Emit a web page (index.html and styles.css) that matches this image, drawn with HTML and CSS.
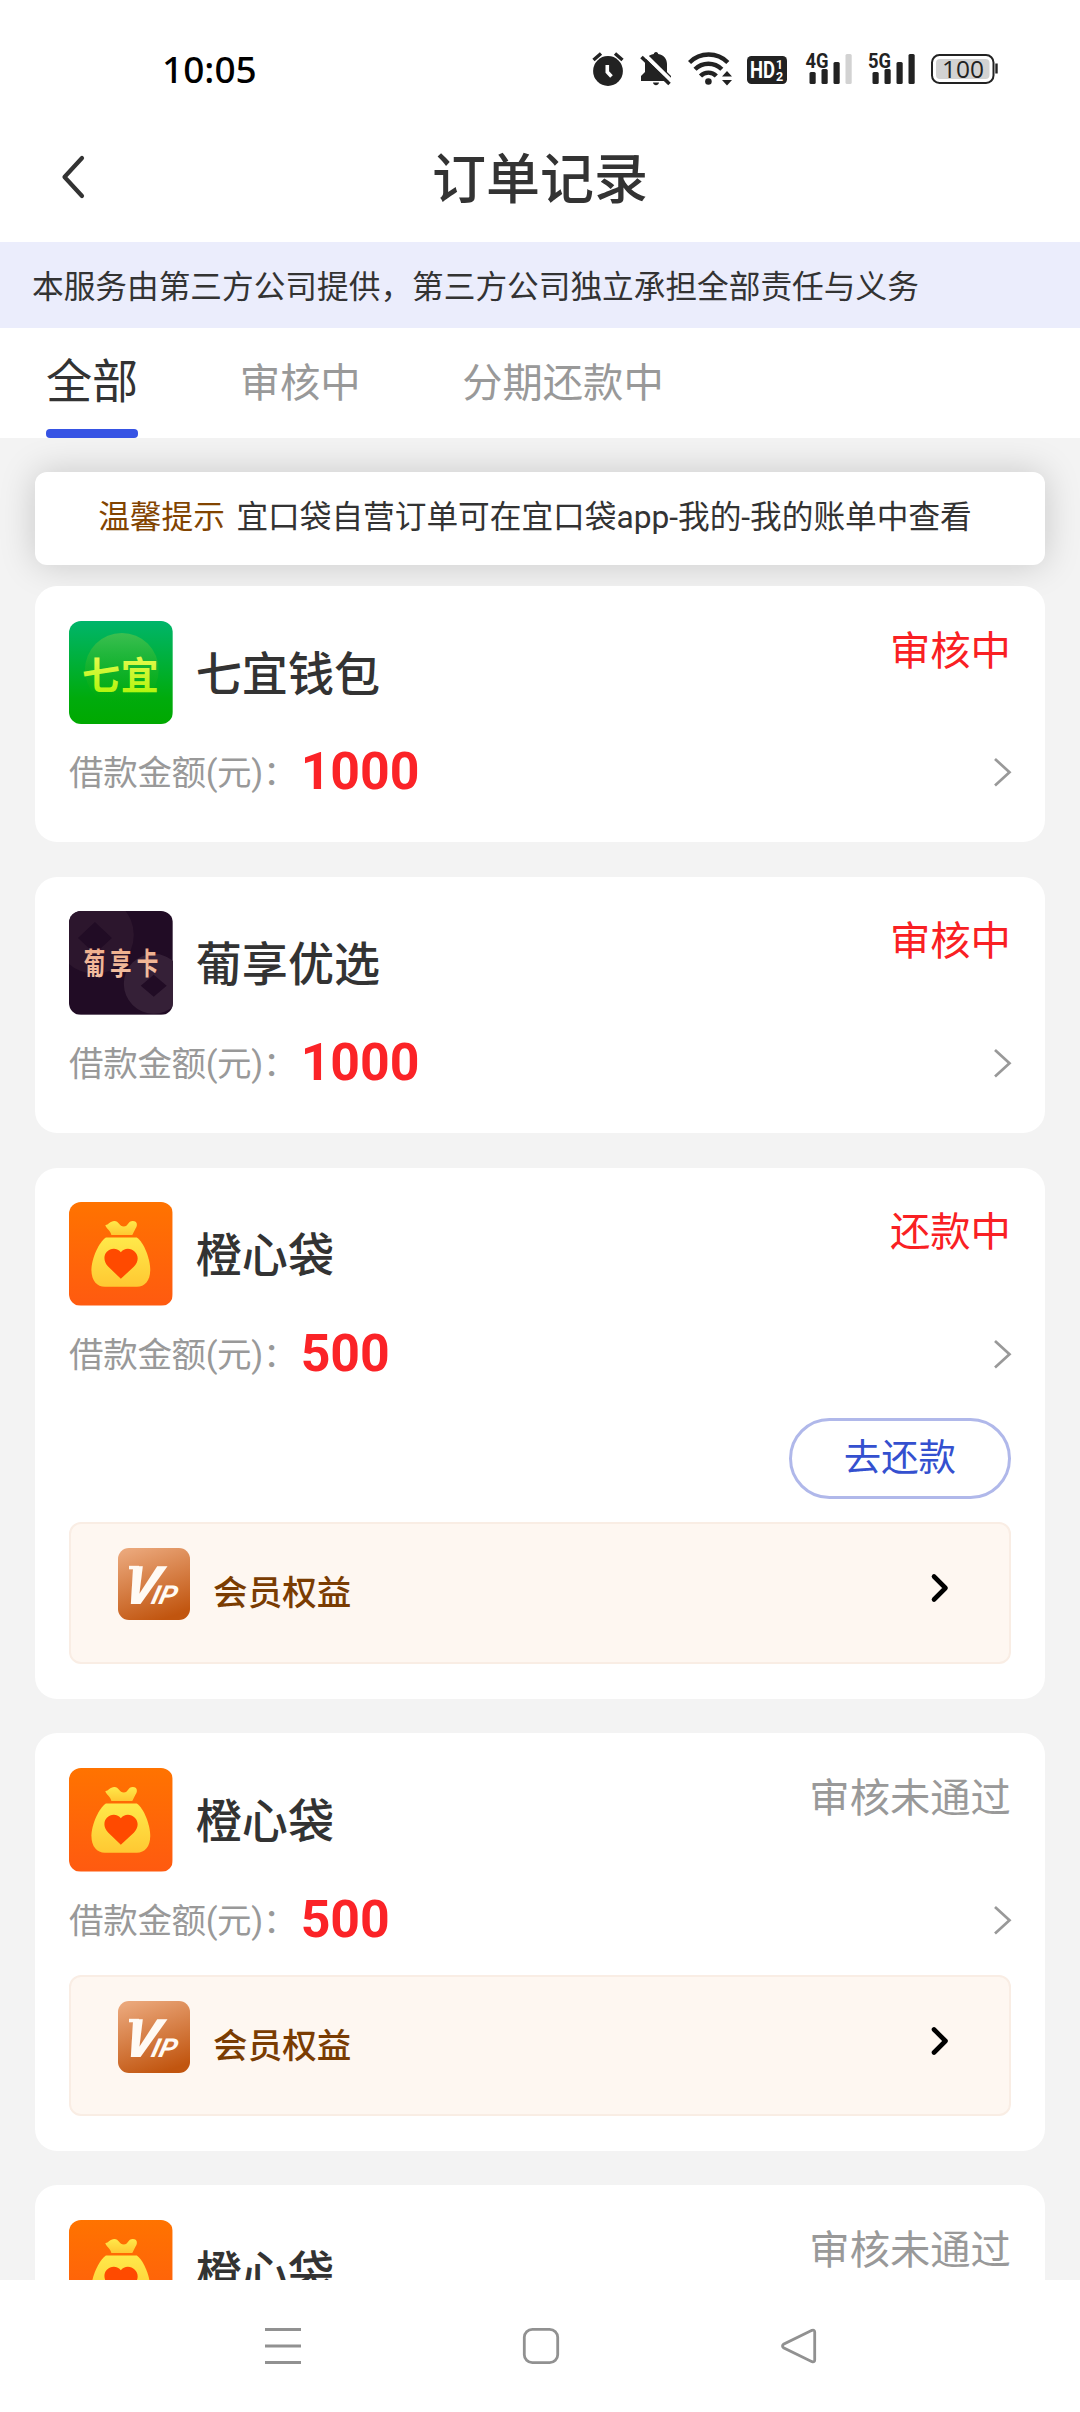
FILE: index.html
```html
<!DOCTYPE html>
<html lang="zh-CN">
<head>
<meta charset="utf-8">
<title>订单记录</title>
<link rel="stylesheet" href="styles.css">
</head>
<body>
<svg class="defs" width="0" height="0" aria-hidden="true">
  <defs>
    <linearGradient id="g-green" x1="0" y1="0" x2="0" y2="1"><stop offset="0" stop-color="#00b56a"/><stop offset=".75" stop-color="#00ab0c"/><stop offset="1" stop-color="#00a900"/></linearGradient>
    <linearGradient id="g-orb" x1="0" y1="0" x2="0" y2="1"><stop offset="0" stop-color="#3cbf50"/><stop offset=".8" stop-color="#10ae10" stop-opacity=".3"/><stop offset="1" stop-color="#00a900" stop-opacity="0"/></linearGradient>
    <linearGradient id="g-lime" x1="0" y1="0" x2="0" y2="1"><stop offset="0" stop-color="#f4fb62"/><stop offset="1" stop-color="#a8f400"/></linearGradient>
    <linearGradient id="g-copper" x1="0" y1="0" x2="0" y2="1"><stop offset="0" stop-color="#eeaa86"/><stop offset="1" stop-color="#f3c2a6"/></linearGradient>
    <linearGradient id="g-orange" x1="0" y1="0" x2="0" y2="1"><stop offset="0" stop-color="#ff7300"/><stop offset="1" stop-color="#ff5a10"/></linearGradient>
    <linearGradient id="g-bag" x1="0" y1="0" x2="0" y2="1"><stop offset="0" stop-color="#ffe94a"/><stop offset="1" stop-color="#ffc832"/></linearGradient>
    <linearGradient id="g-vip" x1=".25" y1="0" x2=".6" y2="1"><stop offset="0" stop-color="#eaa679"/><stop offset="1" stop-color="#c1550f"/></linearGradient>
    <symbol id="bag" viewBox="0 0 104 104">
      <rect width="104" height="104" fill="url(#g-orange)"/>
      <path fill="url(#g-bag)" d="M36.500 23C39 23.500 41 19 45.500 19C50 19 50.500 24.500 55 24.500C59.500 24.500 59 19 64 19C69 19 69 24 66.500 27L63.500 33H42.500C41.500 28 36.500 26 36.500 23Z"/>
      <path fill="url(#g-bag)" d="M37 35.500H68C75 40 81.500 57 81.500 68C81.500 79 76 85 68 85H36C28 85 22.500 79 22.500 68C22.500 57 30 40 37 35.500Z"/>
      <path fill="#ff4a00" d="M52 77L39.500 65C34.500 60 34.500 53.500 38 50C42 45.500 49 46 52 50.500C55 46 62 45.500 66 50C70 54 70 60 65 65Z"/>
    </symbol>
    <symbol id="vip" viewBox="0 0 72 72">
      <rect width="72" height="72" rx="11" fill="url(#g-vip)"/>
      <g fill="#fffaf4" font-family="Roboto, sans-serif" font-style="italic">
        <text transform="translate(3 55.500) skewX(-13)" font-size="53" font-weight="900">V</text>
        <text transform="translate(32 55.500) skewX(-14)" font-size="26" font-weight="700" textLength="25" lengthAdjust="spacingAndGlyphs">IP</text>
      </g>
      <rect x="11" y="17.800" width="10" height="3.500" fill="#fffaf4"/>
    </symbol>
    <symbol id="chevron" viewBox="0 0 20 32"><path d="M3 3L17.500 16.200L3 29.500" fill="none" stroke="#999" stroke-width="2.700"/></symbol>
    <symbol id="chevron-bold" viewBox="0 0 20 32"><path d="M4 4.500L15.500 16L4 27.500" fill="none" stroke="#000" stroke-width="4.600" stroke-linecap="round" stroke-linejoin="round"/></symbol>
  </defs>
</svg>

<div class="phone">
  <header class="status-bar">
    <span class="clock">10:05</span>
    <div class="indicators">
      <svg class="ind-alarm" viewBox="592 51 32 36" width="32" height="36">
        <circle cx="608" cy="71" r="14.900" fill="#222"/>
        <path d="M607.300 65V72L611.500 76.500" fill="none" stroke="#fff" stroke-width="3.600"/>
        <path d="M593.500 60L601 53.500M622.500 60L615 53.500" stroke="#222" stroke-width="3.400"/>
      </svg>
      <svg class="ind-bell" viewBox="640 51 32 36" width="32" height="36">
        <path fill="#222" d="M656 52C657.500 52 658 53 658.200 54C664 55 667 59 667 64V72L671 76V81H641V76L645 72V64C645 59 648 55 653.800 54C654 53 654.500 52 656 52ZM653 82.500H659C658.500 86 653.500 86 653 82.500Z"/>
        <path d="M643.500 53.500L673 82.500" stroke="#fff" stroke-width="4"/>
        <path d="M641.500 57L669.500 84" stroke="#222" stroke-width="3.600"/>
      </svg>
      <svg class="ind-wifi" viewBox="688 51 46 36" width="46" height="36">
        <circle cx="708.400" cy="81.500" r="3.300" fill="#222"/>
        <g fill="none" stroke="#222" stroke-width="4.400">
          <path d="M689.500 62.500A27 27 0 0 1 727.800 62.500"/>
          <path d="M695 69.300A19 19 0 0 1 721.800 69.300"/>
          <path d="M700.500 76A11 11 0 0 1 716.300 76"/>
        </g>
        <path fill="#222" d="M722 76.500L727 71L732 76.500ZM722 80L727 85.500L732 80Z"/>
      </svg>
      <svg class="ind-hd" viewBox="747 51 40 36" width="40" height="36">
        <rect x="747" y="56" width="40" height="28" rx="4.500" fill="#222"/>
        <g fill="#fff" font-family="Roboto, sans-serif" font-weight="700">
          <text x="750" y="77.500" font-size="23" textLength="25" lengthAdjust="spacingAndGlyphs">HD</text>
          <text x="776" y="68.500" font-size="12">1</text>
          <text x="776" y="80.500" font-size="12.500">2</text>
        </g>
      </svg>
      <svg class="ind-sig" viewBox="804 45 49 48" width="49" height="48">
        <text class="net" x="805.500" y="67.500" textLength="23" lengthAdjust="spacingAndGlyphs">4G</text>
        <g fill="#222"><rect x="809.500" y="72" width="6.200" height="12" rx="1.500"/><rect x="821.500" y="69" width="6.200" height="15" rx="1.500"/><rect x="833.500" y="62" width="6.200" height="22" rx="1.500"/></g>
        <rect x="845.500" y="54" width="6.200" height="30" rx="1.500" fill="#d2d2d2"/>
      </svg>
      <svg class="ind-sig2" viewBox="866 45 50 48" width="50" height="48">
        <text class="net" x="868" y="67.500" textLength="23" lengthAdjust="spacingAndGlyphs">5G</text>
        <g fill="#222"><rect x="872.500" y="72" width="6.200" height="12" rx="1.500"/><rect x="884.500" y="69" width="6.200" height="15" rx="1.500"/><rect x="896.500" y="62" width="6.200" height="22" rx="1.500"/><rect x="908.500" y="54" width="6.200" height="30" rx="1.500"/></g>
      </svg>
      <svg class="ind-batt" viewBox="931 51 68 36" width="68" height="36">
        <rect x="932" y="55" width="61.500" height="28" rx="7.500" fill="#fff" stroke="#222" stroke-width="2"/>
        <rect x="936" y="59" width="53.500" height="20" rx="4" fill="#d2d2d2"/>
        <path d="M996.500 63.500V73.500" stroke="#222" stroke-width="2.400"/>
        <text x="963" y="78" text-anchor="middle" font-family="Open Sans, sans-serif" font-size="24" textLength="42" lengthAdjust="spacingAndGlyphs" fill="#222">100</text>
      </svg>
    </div>
  </header>

  <div class="title-bar">
    <svg class="back" viewBox="0 0 26 44" width="26" height="44"><path d="M22 3L4.500 22L22 41" fill="none" stroke="#333" stroke-width="4.200" stroke-linecap="round" stroke-linejoin="round"/></svg>
    <h1 class="title">订单记录</h1>
  </div>

  <p class="notice">本服务由第三方公司提供，第三方公司独立承担全部责任与义务</p>

  <nav class="tabs">
    <a class="tab tab-active">全部</a>
    <a class="tab">审核中</a>
    <a class="tab">分期还款中</a>
  </nav>

  <main class="list">
    <div class="tip"><span class="tip-label">温馨提示</span><span>宜口袋自营订单可在宜口袋app-我的-我的账单中查看</span></div>

    <article class="card">
      <div class="card-head">
        <svg class="logo" viewBox="0 0 104 104">
          <rect width="104" height="104" fill="url(#g-green)"/>
          <circle cx="53" cy="49" r="37" fill="url(#g-orb)"/>
          <text class="logo-text" y="68.500" font-size="38" fill="url(#g-lime)"><tspan x="13">七</tspan><tspan x="52">宜</tspan></text>
        </svg>
        <h2 class="name">七宜钱包</h2>
        <span class="state">审核中</span>
      </div>
      <div class="amount"><span class="label">借款金额(元)：</span><b class="value">1000</b><svg class="go"><use href="#chevron"/></svg></div>
    </article>

    <article class="card">
      <div class="card-head">
        <svg class="logo" viewBox="0 0 104 104">
          <rect width="104" height="104" fill="#210c25"/>
          <path fill="#2c162d" fill-rule="evenodd" d="M26 -15A39 39 0 0 1 26 63A39 39 0 0 1 26 -15ZM26 11L9 27L26 43L43 27Z"/>
          <path fill="#352037" fill-rule="evenodd" d="M85 43A30 30 0 0 1 85 103A30 30 0 0 1 85 43ZM85 64L72 75L85 86L98 75Z"/>
          <text class="logo-text" transform="scale(.72 1)" y="63" font-size="30" fill="url(#g-copper)"><tspan x="20.500">葡</tspan><tspan x="57">享</tspan><tspan x="94.500">卡</tspan></text>
        </svg>
        <h2 class="name">葡享优选</h2>
        <span class="state">审核中</span>
      </div>
      <div class="amount"><span class="label">借款金额(元)：</span><b class="value">1000</b><svg class="go"><use href="#chevron"/></svg></div>
    </article>

    <article class="card">
      <div class="card-head">
        <svg class="logo"><use href="#bag"/></svg>
        <h2 class="name">橙心袋</h2>
        <span class="state">还款中</span>
      </div>
      <div class="amount"><span class="label">借款金额(元)：</span><b class="value">500</b><svg class="go"><use href="#chevron"/></svg></div>
      <div class="actions"><button class="repay" type="button">去还款</button></div>
      <div class="vip"><svg class="vip-icon"><use href="#vip"/></svg><span class="vip-text">会员权益</span><svg class="vip-go"><use href="#chevron-bold"/></svg></div>
    </article>

    <article class="card">
      <div class="card-head">
        <svg class="logo"><use href="#bag"/></svg>
        <h2 class="name">橙心袋</h2>
        <span class="state state-off">审核未通过</span>
      </div>
      <div class="amount"><span class="label">借款金额(元)：</span><b class="value">500</b><svg class="go"><use href="#chevron"/></svg></div>
      <div class="vip"><svg class="vip-icon"><use href="#vip"/></svg><span class="vip-text">会员权益</span><svg class="vip-go"><use href="#chevron-bold"/></svg></div>
    </article>

    <article class="card">
      <div class="card-head">
        <svg class="logo"><use href="#bag"/></svg>
        <h2 class="name">橙心袋</h2>
        <span class="state state-off">审核未通过</span>
      </div>
    </article>
  </main>

  <footer class="system-nav">
    <svg viewBox="0 0 40 40" width="40" height="40"><path d="M2 3.500H38M2 20H38M2 36.500H38" stroke="#919191" stroke-width="3"/></svg>
    <svg viewBox="0 0 40 40" width="40" height="40"><rect x="3.300" y="3.300" width="33.400" height="33.400" rx="8" fill="none" stroke="#919191" stroke-width="2.800"/></svg>
    <svg viewBox="0 0 40 40" width="40" height="40"><path d="M33 4.300L4.500 18.200Q2.500 20 4.500 21.800L33 35.700Q35.700 36.500 35.700 34V6Q35.700 3.500 33 4.300Z" fill="none" stroke="#919191" stroke-width="2.800"/></svg>
  </footer>
</div>
</body>
</html>
```
FILE: styles.css
```css
* { box-sizing: border-box; margin: 0; padding: 0; }

body {
  width: 1080px;
  background: #fff;
  color: #333;
  font-family: Roboto, "Noto Sans CJK SC", sans-serif;
}

svg { display: block; flex: none; }
.defs { position: absolute; }

.phone {
  display: flex;
  flex-direction: column;
  height: 2412px;
  overflow: hidden;
}

.status-bar {
  display: flex;
  justify-content: space-between;
  align-items: center;
  flex: none;
  height: 112px;
  padding: 26px 81px 0 162px;
}
.clock {
  color: #000;
  font: 500 37px/40px "Noto Sans", sans-serif;
}
.indicators { display: flex; align-items: center; }
.ind-bell { margin-left: 16px; }
.ind-wifi { margin-left: 16px; }
.ind-hd { margin-left: 13px; }
.ind-sig { margin-left: 17px; }
.ind-sig2 { margin-left: 13px; }
.ind-batt { margin-left: 15px; }
.net {
  font: 700 21px Roboto, sans-serif;
  fill: #222;
}

.title-bar {
  display: grid;
  grid-template-columns: 60px 1fr 60px;
  align-items: center;
  flex: none;
  height: 130px;
  padding: 0 60px;
}
.title {
  padding-top: 7px;
  text-align: center;
  font-size: 54px;
  font-weight: 500;
  line-height: 123px;
}

.notice {
  flex: none;
  height: 86px;
  padding-left: 32px;
  background: #ebedfc;
  font-size: 31.68px;
  line-height: 91px;
}

.tabs {
  display: flex;
  gap: 101.500px;
  flex: none;
  height: 110px;
  padding-left: 46px;
  line-height: 111px;
}
.tab { color: #999; font-size: 40.320px; }
.tab-active {
  height: 110px;
  color: #333;
  font-size: 46.080px;
  line-height: 109px;
}
.tab-active::after {
  content: "";
  display: block;
  height: 9px;
  margin-top: -8px;
  border-radius: 4px;
  background: #3653e4;
}

.list {
  display: flex;
  flex-direction: column;
  gap: 34.900px;
  height: 1842px;
  padding: 34px 34.560px 0;
  overflow: hidden;
  background: #f3f3f3;
}

.tip {
  display: flex;
  justify-content: center;
  gap: 11.500px;
  flex: none;
  height: 93px;
  margin-bottom: -13.900px;
  padding-right: 10px;
  border-radius: 12px;
  background: #fff;
  box-shadow: 0 0 36px rgba(0, 0, 0, .18);
  font-size: 31.680px;
  line-height: 92px;
}
.tip-label { color: #824400; }

.card {
  position: relative;
  flex: none;
  min-height: 256px;
  padding: 34.560px;
  border-radius: 22px;
  background: #fff;
}
.card-head { display: flex; }
.logo {
  width: 103.680px;
  height: 103.680px;
  border-radius: 12px;
}
.logo-text { font-family: "Noto Sans CJK SC", sans-serif; font-weight: 700; }
.name {
  height: 103.680px;
  margin-left: 23px;
  font-size: 46.080px;
  font-weight: 500;
  line-height: 109px;
}
.state {
  margin-left: auto;
  color: #f92023;
  font-size: 40.320px;
  line-height: 61px;
}
.state-off { color: #999; }

.amount {
  display: flex;
  align-items: center;
  height: 83px;
  padding-top: 13px;
}
.label {
  margin: -4px 3.600px 0 0;
  color: #999;
  font-size: 34.560px;
  letter-spacing: -.4px;
}
.value { color: #fb2327; font-size: 51.840px; line-height: 60px; }
.go { width: 20px; height: 32px; margin: 0 -1px 0 auto; }

.actions {
  display: flex;
  justify-content: flex-end;
  padding: 29px 0 4px;
}
.repay {
  width: 222px;
  height: 80.600px;
  border: 3px solid #b0b8ea;
  border-radius: 41px;
  background: #fff;
  color: #3450cf;
  font: 37.440px/70px Roboto, "Noto Sans CJK SC", sans-serif;
}

.vip {
  display: flex;
  align-items: flex-start;
  height: 141.500px;
  margin-top: 19.900px;
  padding: 24px 59px 0 47px;
  border: 2px solid #f9ede4;
  border-radius: 12px;
  background: #fef7f1;
}
.vip-icon { width: 72px; height: 72px; }
.vip-text {
  margin-left: 23px;
  color: #7a3c02;
  font-size: 34.560px;
  font-weight: 500;
  line-height: 90px;
}
.vip-go { width: 20px; height: 32px; margin: 24px 0 0 auto; }

.system-nav {
  display: flex;
  justify-content: center;
  align-items: center;
  gap: 218px;
  flex: none;
  height: 132px;
  padding-left: 2px;
  background: #fff;
}
```
